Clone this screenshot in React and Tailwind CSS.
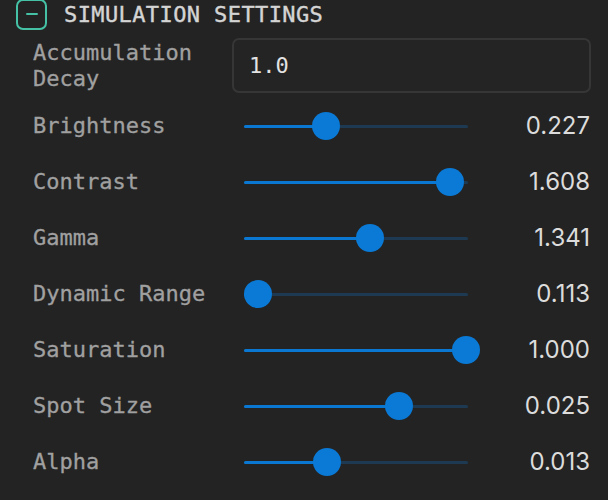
import React from 'react';

const sliders = [
  { label: 'Brightness', value: '0.227', pos: 82 },
  { label: 'Contrast', value: '1.608', pos: 206 },
  { label: 'Gamma', value: '1.341', pos: 126 },
  { label: 'Dynamic Range', value: '0.113', pos: 14 },
  { label: 'Saturation', value: '1.000', pos: 222 },
  { label: 'Spot Size', value: '0.025', pos: 155 },
  { label: 'Alpha', value: '0.013', pos: 83 },
];

const mono = "font-['DejaVu_Sans_Mono','Liberation_Mono',monospace]";

const Slider = ({ pos }) => (
  <div className="relative w-[224px] h-[28px]">
    <div className="absolute left-0 right-0 top-[13px] h-[3px] rounded-full bg-[#1d3a52]" />
    <div className="absolute left-0 top-[13px] h-[3px] rounded-full bg-[#0a78d2]" style={{ width: pos }} />
    <div className="absolute top-0 w-[28px] h-[28px] rounded-full bg-[#0a7ad6]" style={{ left: pos - 14 }} />
  </div>
);

export default function App() {
  return (
    <div className="min-h-screen bg-[#232323] pl-[16px] pr-[17px] overflow-hidden">
      {/* header */}
      <div className="flex items-center h-[38px] -mt-[5px]">
        <div className="w-[31px] h-[31px] rounded-[7px] border-2 border-[#45c2a5] flex items-center justify-center">
          <div className="w-[12px] h-[2px] bg-[#45c2a5] rounded" />
        </div>
        <span className={`ml-[17px] text-[22px] tracking-[0.4px] text-[#d4d4d4] [-webkit-text-stroke:0.4px_#d4d4d4] ${mono}`}>SIMULATION SETTINGS</span>
      </div>

      <div className="pl-[17px] mt-[5px]">
        {/* accumulation decay */}
        <div className="grid grid-cols-[199px_1fr] h-[60px] items-start">
          <div className={`h-[55px] flex items-center text-[22px] leading-[26px] text-[#a0a0a0] [-webkit-text-stroke:0.3px_#a0a0a0] ${mono}`}>
            Accumulation Decay
          </div>
          <div className="h-[55px] rounded-[7px] border-2 border-[#363636] bg-[#242424] flex items-center px-[15px]">
            <span className={`text-[22px] text-[#e2e2e2] ${mono}`}>1.0</span>
          </div>
        </div>

        {sliders.map((s) => (
          <div key={s.label} className="grid grid-cols-[199px_1fr] h-[56px] items-center">
            <div className={`text-[22px] leading-[26px] text-[#a0a0a0] whitespace-nowrap [-webkit-text-stroke:0.3px_#a0a0a0] ${mono}`}>{s.label}</div>
            <div className="flex items-center pl-[12px]">
              <Slider pos={s.pos} />
              <span className="ml-auto pr-[1px] text-[24px] text-[#dcdcdc] font-['Inter','Liberation_Sans',sans-serif]">{s.value}</span>
            </div>
          </div>
        ))}
      </div>
    </div>
  );
}
